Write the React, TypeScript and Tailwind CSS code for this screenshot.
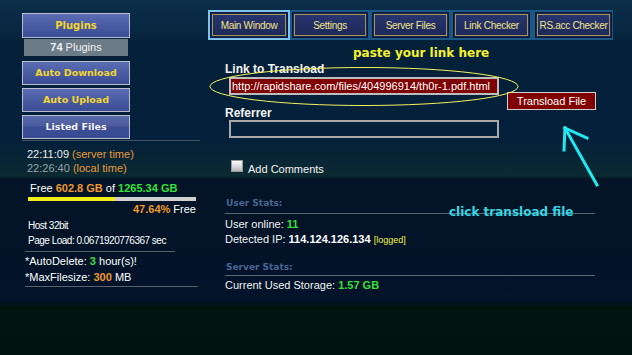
const txt = "font-['Liberation_Sans',Arial,sans-serif]";
const px = "font-['DejaVu_Sans',Verdana,sans-serif]";

function SideButton({ label, color, mt }: { label: string; color: string; mt: string }) {
  return (
    <div
      className={`${mt} ${px} ${color} h-[24px] w-[108px] border border-[#b9bccb] bg-[linear-gradient(#5a6cb2,#3a4c94)] flex items-center justify-center text-[9.5px] font-bold`}
    >
      {label}
    </div>
  );
}

function Tab({ label, w, ml }: { label: string; w: string; ml: string }) {
  return (
    <div className={`${w} ${ml} h-[26px] border border-[#0c1834] bg-[#1c2756] p-[1px]`}>
      <div
        className={`${txt} h-full border border-[#a3955a] bg-[linear-gradient(#28356e,#1d2959)] flex items-center justify-center text-[10px] tracking-[-0.3px] text-[#f3e48a] whitespace-nowrap`}
      >
        {label}
      </div>
    </div>
  );
}

export default function App() {
  return (
    <div
      className={`${txt} relative w-[632px] h-[355px] overflow-hidden text-white bg-[linear-gradient(to_bottom,#0c2e49_0px,#082741_32px,#05213a_42px,#04203a_140px,#0b2a31_176px,#031426_179px,#02132a_300px,#021410_307px,#011310_355px)] flex`}
    >
      {/* left column */}
      <div className="w-[208px] pl-[22px] pt-[13px] flex flex-col">
        <div className={`${px} h-[25px] w-[108px] border border-[#b9bccb] bg-[linear-gradient(#5a6cb2,#3a4c94)] flex items-center justify-center text-[10px] font-bold text-[#f2d62e]`}>
          Plugins
        </div>
        <div className="mt-[1px] mx-[2px] w-[104px] h-[17px] bg-[#6b7c87] flex items-center justify-center text-[11px] text-[#f0f0f0]">
          <b>74</b>&nbsp;Plugins
        </div>
        <SideButton label="Auto Download" color="text-[#f2d62e]" mt="mt-[5px]" />
        <SideButton label="Auto Upload" color="text-[#f2d62e]" mt="mt-[3px]" />
        <div className={`mt-[3px] ${px} h-[24px] w-[108px] border border-[#b9bccb] bg-[linear-gradient(#5868a8_0%,#4c5c9c_45%,#3a4c94_50%,#3a4c94_100%)] flex items-center justify-center text-[9.5px] font-bold text-[#f4f4f4]`}>
          Listed Files
        </div>
        <div className="mt-[1px] h-px w-[178px] bg-[#46535f]" />

        <div className="mt-[6px] pl-[5px] text-[11px] leading-[14px]">
          <div>
            <span className="text-[#ececec]">22:11:09</span> <span className="text-[#e89a3c]">(server time)</span>
          </div>
          <div>
            <span className="text-[#9aa3ab]">22:26:40</span> <span className="text-[#e89a3c]">(local time)</span>
          </div>
        </div>

        <div className="mt-[6px] pl-[8px] text-[11px] leading-[14px] whitespace-nowrap">
          Free <b className="text-[#f0982c]">602.8 GB</b> of <b className="text-[#35e03a]">1265.34 GB</b>
        </div>
        <div className="mt-[2px] ml-[6px] w-[168px] h-[4px] bg-[#cfcfcf] flex">
          <div className="w-[87px] h-full bg-[#f2ee1c]" />
        </div>
        <div className="mt-[1px] w-[174px] text-right text-[11px] leading-[14px]">
          <b className="text-[#f0982c]">47.64%</b> Free
        </div>
        <div className="mt-[3px] pl-[6px] text-[10px] tracking-[-0.5px] leading-[14px]">Host 32bit</div>
        <div className="mt-[1px] pl-[6px] text-[10px] tracking-[-0.5px] leading-[14px] whitespace-nowrap">Page Load: 0.0671920776367 sec</div>
        <div className="mt-[3px] ml-[3px] h-px w-[150px] bg-[#56626c]" />
        <div className="mt-[2px] pl-[3px] text-[11px] leading-[14px] whitespace-nowrap">
          *AutoDelete: <b className="text-[#35e03a]">3</b> hour(s)!
        </div>
        <div className="mt-[2px] pl-[3px] text-[11px] leading-[14px] whitespace-nowrap">
          *MaxFilesize: <b className="text-[#f0982c]">300</b> MB
        </div>
        <div className="mt-[2px] ml-[3px] h-px w-[173px] bg-[#56626c]" />
      </div>

      {/* right column */}
      <div className="flex-1 flex flex-col">
        <div className="mt-[10px] h-[30px] w-[405px] bg-[#1b5886] flex items-center">
          <div className="w-[82px] h-[30px] border-2 border-[#7cc6ee] flex">
            <Tab label="Main Window" w="w-[78px]" ml="ml-0" />
          </div>
          <Tab label="Settings" w="w-[76px]" ml="ml-[2px]" />
          <Tab label="Server Files" w="w-[77px]" ml="ml-[4px]" />
          <Tab label="Link Checker" w="w-[77px]" ml="ml-[4px]" />
          <Tab label="RS.acc Checker" w="w-[77px]" ml="ml-[5px]" />
        </div>

        <div className={`${px} mt-[6px] pl-[145px] text-[12px] leading-[14px] font-bold text-[#f6f22a] whitespace-nowrap`}>
          paste your link here
        </div>

        <div className="mt-[2px] flex items-start">
          <div className="flex flex-col">
            <div className="ml-[17px] text-[12px] leading-[14px] font-bold text-[#f4f4f4]">Link to Transload</div>
            <input
              readOnly
              value="http://rapidshare.com/files/404996914/th0r-1.pdf.html"
              className={`${txt} mt-[1px] ml-[21px] w-[270px] h-[18px] border-2 border-[#bdbdbd] bg-[#7e0000] px-[1px] text-[11px] text-white outline-none`}
            />
            <div className="mt-[11px] ml-[17px] text-[12px] leading-[14px] font-bold text-[#f4f4f4]">Referrer</div>
            <input
              readOnly
              value=""
              className="ml-[21px] w-[270px] h-[18px] border-2 border-[#a9a9a9] bg-transparent outline-none"
            />
          </div>
          <div className="mt-[30px] ml-[8px] w-[89px] h-[18px] border border-[#cfcfcf] bg-[#800000] flex items-center justify-center text-[11px] text-white">
            Transload File
          </div>
        </div>

        <div className="mt-[22px] ml-[23px] flex items-start">
          <div className="w-[12px] h-[12px] border border-[#9a9a9a] bg-[linear-gradient(#ffffff,#b8b8b8)]" />
          <div className="ml-[5px] mt-[2px] text-[11px] leading-[14px] text-[#f2f2f2]">Add Comments</div>
        </div>

        <div className={`${px} mt-[21px] ml-[18px] text-[9px] leading-[12px] font-bold text-[#4c6494]`}>User Stats:</div>
        <div className="mt-[4px] ml-[17px] h-px w-[370px] bg-[#5a6670]" />
        <div className="mt-[3px] ml-[17px] text-[11px] leading-[15px] text-[#f2f2f2]">
          <div>
            User online: <b className="text-[#35e03a]">11</b>
          </div>
          <div className="whitespace-nowrap">
            Detected IP: <b className="text-white">114.124.126.134</b>{" "}
            <span className="text-[9px] text-[#f2f040]">[logged]</span>
          </div>
        </div>
        <div className={`${px} mt-[13px] ml-[18px] text-[9px] leading-[12px] font-bold text-[#4c6494]`}>Server Stats:</div>
        <div className="mt-[2px] ml-[17px] h-px w-[370px] bg-[#5a6670]" />
        <div className="mt-[2px] ml-[17px] text-[11px] leading-[15px] text-[#f2f2f2] whitespace-nowrap">
          Current Used Storage: <b className="text-[#35e03a]">1.57 GB</b>
        </div>
      </div>

      {/* annotations drawn over the page */}
      <svg className="absolute left-[208px] top-[66px]" width="312" height="42" viewBox="0 0 312 42">
        <ellipse cx="156" cy="20.5" rx="154" ry="19" fill="none" stroke="#f4f25a" strokeWidth="1" />
      </svg>
      <svg className="absolute left-[558px] top-[122px]" width="50" height="70" viewBox="0 0 50 70">
        <g stroke="#22e8f0" strokeWidth="3" strokeLinecap="square" fill="none">
          <line x1="39" y1="63" x2="7" y2="6" />
          <line x1="7" y1="6" x2="29" y2="16" />
          <line x1="7" y1="6" x2="6" y2="28" />
        </g>
      </svg>
      <div className={`${px} absolute left-[449px] top-[205px] text-[12px] leading-[14px] font-bold text-[#33d6e2] whitespace-nowrap`}>
        click transload file
      </div>
    </div>
  );
}
